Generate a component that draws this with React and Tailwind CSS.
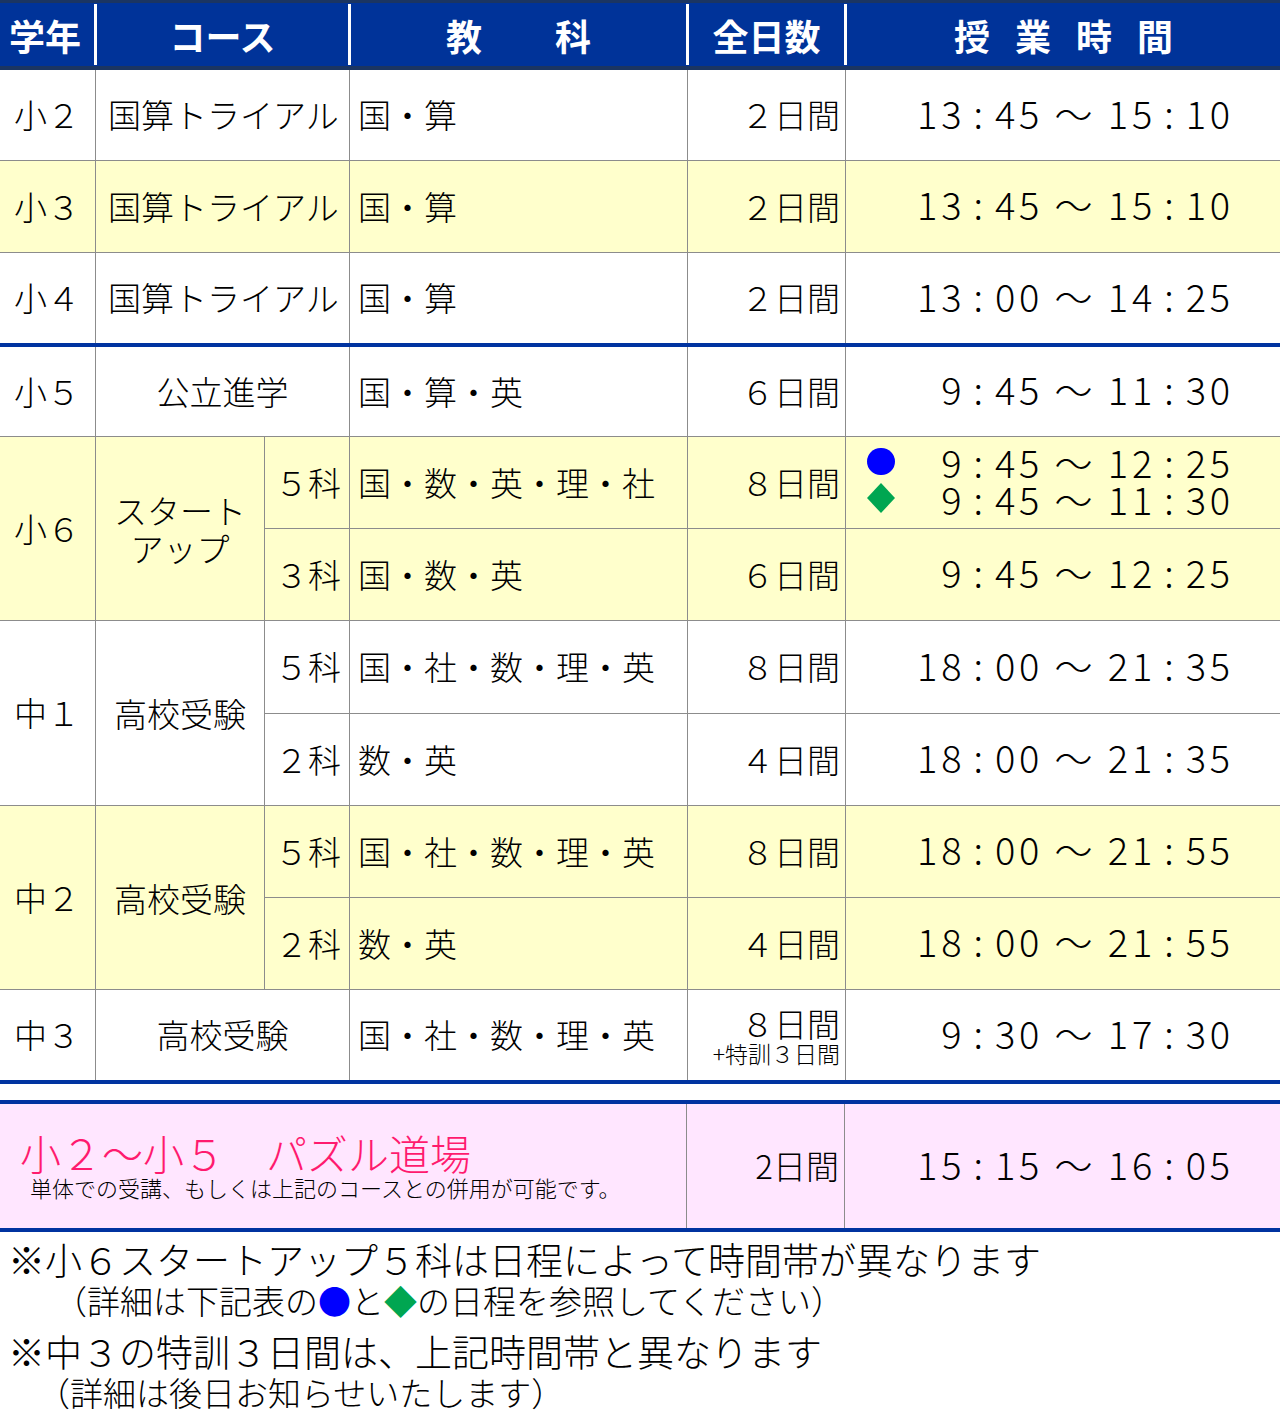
import React from 'react';

const font = "font-['Noto_Sans_CJK_JP',sans-serif]";

// times: centred half-width colon and a wide tilde, like the printed table
function T({ v }) {
  return (
    <span>
      {[...v].map((c, i) => {
        if (c === ' ') return null;
        if (c === '：')
          return (
            <span key={i} className="inline-block w-[0.78em] text-center">
              :
            </span>
          );
        if (c === '～')
          return (
            <span key={i} className="inline-block w-[1.7em] text-center">
              ～
            </span>
          );
        return <React.Fragment key={i}>{c}</React.Fragment>;
      })}
    </span>
  );
}

function Grade({ children }) {
  return (
    <div className="w-[96px] shrink-0 flex items-center pl-[14px] border-r border-[#8c8c8c]">{children}</div>
  );
}

function Subjects({ children }) {
  return (
    <div className="w-[338px] shrink-0 flex items-center pl-[8px] border-r border-[#8c8c8c] whitespace-nowrap">{children}</div>
  );
}

function Days({ children }) {
  return (
    <div className="w-[158px] shrink-0 flex items-center justify-end pr-[5px] border-r border-[#8c8c8c]">{children}</div>
  );
}

function Time({ v }) {
  return (
    <div className="flex-1 flex items-center justify-end pr-[46px] pb-[6px] text-[38px] tracking-[0.1em] whitespace-nowrap">
      <T v={v} />
    </div>
  );
}

function Kamoku({ children }) {
  return (
    <div className="w-[85px] shrink-0 flex items-center justify-end pr-[8px] border-r border-[#8c8c8c]">{children}</div>
  );
}

function SimpleRow({ grade, course, center, subjects, days, time, className }) {
  return (
    <div className={`flex ${className}`}>
      <Grade>{grade}</Grade>
      <div
        className={`w-[254px] shrink-0 flex items-center border-r border-[#8c8c8c] whitespace-nowrap ${
          center ? 'justify-center' : 'pl-[12px]'
        }`}
      >
        {course}
      </div>
      <Subjects>{subjects}</Subjects>
      <Days>{days}</Days>
      <Time v={time} />
    </div>
  );
}

function Band({ grade, course, rows, className }) {
  return (
    <div className={`flex ${className}`}>
      <Grade>{grade}</Grade>
      <div className="w-[169px] shrink-0 flex items-center justify-center text-center leading-[38px] border-r border-[#8c8c8c]">
        {course}
      </div>
      <div className="flex-1 flex flex-col">
        {rows.map((r, i) => (
          <div key={i} className={`flex ${r.h} ${i < rows.length - 1 ? 'border-b border-[#8c8c8c]' : ''}`}>
            <Kamoku>{r.k}</Kamoku>
            <Subjects>{r.s}</Subjects>
            <Days>{r.d}</Days>
            {r.t}
          </div>
        ))}
      </div>
    </div>
  );
}

function Diamond() {
  return (
    <svg width="28" height="30" viewBox="0 0 28 30">
      <polygon points="14,0 28,15 14,30 0,15" fill="#00a651" />
    </svg>
  );
}

export default function App() {
  const tri = '国算トライアル';

  return (
    <div className={`w-[1280px] min-h-[1421px] bg-white text-black font-light ${font}`}>
      {/* header */}
      <div className="flex h-[70px] bg-[#003399] border-t-[3px] border-b-[4px] border-[#1b3562] text-white font-bold text-[36px]">
        <div className="w-[94px] flex items-center pl-[9px]">学年</div>
        <div className="w-[3px] bg-white my-[1px]" />
        <div className="w-[251px] flex items-center justify-center">コース</div>
        <div className="w-[3px] bg-white my-[1px]" />
        <div className="w-[335px] flex items-center justify-center gap-[73px]">
          <span>教</span>
          <span>科</span>
        </div>
        <div className="w-[3px] bg-white my-[1px]" />
        <div className="w-[155px] flex items-center justify-center">全日数</div>
        <div className="w-[3px] bg-white my-[1px]" />
        <div className="flex-1 flex items-center justify-center gap-[25px]">
          <span>授</span>
          <span>業</span>
          <span>時</span>
          <span>間</span>
        </div>
      </div>

      {/* body */}
      <div className="text-[33px]">
        <SimpleRow
          className="h-[91px] border-b border-[#8c8c8c]"
          grade="小２"
          course={tri}
          subjects="国・算"
          days="２日間"
          time="13：45 ～ 15：10"
        />
        <SimpleRow
          className="h-[92px] border-b border-[#8c8c8c] bg-[#ffffcc]"
          grade="小３"
          course={tri}
          subjects="国・算"
          days="２日間"
          time="13：45 ～ 15：10"
        />
        <SimpleRow
          className="h-[94px] border-b-4 border-[#0033a0]"
          grade="小４"
          course={tri}
          subjects="国・算"
          days="２日間"
          time="13：00 ～ 14：25"
        />
        <SimpleRow
          className="h-[90px] border-b border-[#8c8c8c]"
          grade="小５"
          course="公立進学"
          center
          subjects="国・算・英"
          days="６日間"
          time="9：45 ～ 11：30"
        />
        <Band
          className="h-[184px] border-b border-[#8c8c8c] bg-[#ffffcc]"
          grade="小６"
          course={
            <span>
              スタート
              <br />
              アップ
            </span>
          }
          rows={[
            {
              h: 'h-[92px]',
              k: '５科',
              s: '国・数・英・理・社',
              d: '８日間',
              t: (
                <div className="flex-1 flex flex-col justify-center text-[38px] tracking-[0.1em] leading-[37px] pb-[6px]">
                  <div className="flex items-center justify-between pl-[21px] pr-[46px]">
                    <span className="w-[28px] h-[27px] rounded-full bg-[#0000ff]" />
                    <T v="9：45 ～ 12：25" />
                  </div>
                  <div className="flex items-center justify-between pl-[21px] pr-[46px]">
                    <Diamond />
                    <T v="9：45 ～ 11：30" />
                  </div>
                </div>
              ),
            },
            { h: 'h-[91px]', k: '３科', s: '国・数・英', d: '６日間', t: <Time v="9：45 ～ 12：25" /> },
          ]}
        />
        <Band
          className="h-[185px] border-b border-[#8c8c8c]"
          grade="中１"
          course="高校受験"
          rows={[
            { h: 'h-[93px]', k: '５科', s: '国・社・数・理・英', d: '８日間', t: <Time v="18：00 ～ 21：35" /> },
            { h: 'h-[91px]', k: '２科', s: '数・英', d: '４日間', t: <Time v="18：00 ～ 21：35" /> },
          ]}
        />
        <Band
          className="h-[184px] border-b border-[#8c8c8c] bg-[#ffffcc]"
          grade="中２"
          course="高校受験"
          rows={[
            { h: 'h-[92px]', k: '５科', s: '国・社・数・理・英', d: '８日間', t: <Time v="18：00 ～ 21：55" /> },
            { h: 'h-[91px]', k: '２科', s: '数・英', d: '４日間', t: <Time v="18：00 ～ 21：55" /> },
          ]}
        />
        <SimpleRow
          className="h-[94px] border-b-4 border-[#0033a0]"
          grade="中３"
          course="高校受験"
          center
          subjects="国・社・数・理・英"
          days={
            <div className="flex flex-col items-end">
              <span className="leading-[36px]">８日間</span>
              <span className="text-[23px] leading-[24px]">+特訓３日間</span>
            </div>
          }
          time="9：30 ～ 17：30"
        />

        {/* puzzle row */}
        <div className="flex h-[132px] mt-[16px] border-y-4 border-[#0033a0] bg-[#ffe6ff]">
          <div className="w-[687px] shrink-0 flex flex-col justify-center border-r border-[#8c8c8c]">
            <div className="pl-[20px] text-[41px] leading-[42px] text-[#ff1a6e] whitespace-nowrap">
              小２～小５　パズル道場
            </div>
            <div className="pl-[30px] text-[22px] leading-[28px] whitespace-nowrap">
              単体での受講、もしくは上記のコースとの併用が可能です。
            </div>
          </div>
          <Days>2日間</Days>
          <Time v="15：15 ～ 16：05" />
        </div>
      </div>

      {/* notes */}
      <div className="pt-[4px] whitespace-nowrap">
        <div className="pl-[8px] text-[37px] leading-[46px]">※小６スタートアップ５科は日程によって時間帯が異なります</div>
        <div className="pl-[54px] text-[33px] leading-[36px]">
          （詳細は下記表の<span className="text-[#0000ff]">●</span>と<span className="text-[#00a651]">◆</span>の日程を参照してください）
        </div>
        <div className="pl-[8px] mt-[10px] text-[37px] leading-[46px]">※中３の特訓３日間は、上記時間帯と異なります</div>
        <div className="pl-[37px] text-[33px] leading-[36px]">（詳細は後日お知らせいたします）</div>
      </div>
    </div>
  );
}
